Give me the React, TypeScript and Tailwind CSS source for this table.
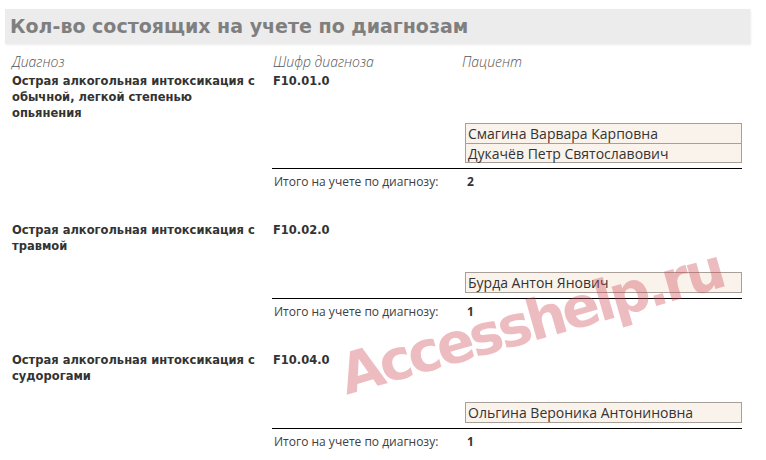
const verdana = "font-['DejaVu_Sans',sans-serif]"
const segoe = "font-['Open_Sans',sans-serif]"

interface DiagnosisGroup {
  readonly name: string
  readonly code: string
  readonly patients: readonly string[]
}

const groups: DiagnosisGroup[] = [
  {
    name: 'Острая алкогольная интоксикация с обычной, легкой степенью опьянения',
    code: 'F10.01.0',
    patients: ['Смагина Варвара Карповна', 'Дукачёв Петр Святославович'],
  },
  {
    name: 'Острая алкогольная интоксикация с травмой',
    code: 'F10.02.0',
    patients: ['Бурда Антон Янович'],
  },
  {
    name: 'Острая алкогольная интоксикация с судорогами',
    code: 'F10.04.0',
    patients: ['Ольгина Вероника Антониновна'],
  },
]

function GroupBlock({ group }: { group: DiagnosisGroup }) {
  return (
    <section>
      <div className="flex h-[50px]">
        <div className={`ml-[12px] w-[250px] text-[11.5px] font-bold leading-[16px] text-[#333] ${verdana}`}>
          {group.name}
        </div>
        <div className={`ml-[11px] text-[11.5px] font-bold leading-[16px] text-[#333] ${verdana}`}>
          {group.code}
        </div>
      </div>

      <div className="ml-[465px] w-[277px] border border-[#a8a098] bg-[#faf3ec]">
        {group.patients.map((p, i) => (
          <div
            key={p}
            className={`h-[19px] px-[2px] text-[14px] leading-[19px] text-[#333] ${segoe} ${
              i > 0 ? 'border-t border-[#a8a098]' : ''
            }`}
          >
            {p}
          </div>
        ))}
      </div>

      <div className="ml-[272px] mt-[5px] flex w-[470px] border-t border-black pb-[32px] pt-[5px]">
        <span className={`w-[195px] pl-[2px] text-[12px] leading-[16px] text-[#404040] ${segoe}`}>
          Итого на учете по диагнозу:
        </span>
        <span className={`text-[12px] font-bold leading-[16px] text-[#333] ${segoe}`}>
          {group.patients.length}
        </span>
      </div>
    </section>
  )
}

export default function App() {
  return (
    <div className="relative h-[460px] w-[766px] overflow-hidden bg-white">
      <div className="ml-[5px] mt-[9px] flex h-[35px] w-[745px] items-center bg-[#ececec] pl-[5px] shadow-[1px_1px_2px_rgba(0,0,0,0.08)]">
        <h1 className={`text-[19px] font-bold text-[#7f7f7f] ${verdana}`}>
          Кол-во состоящих на учете по диагнозам
        </h1>
      </div>

      <div className={`mt-[8px] flex h-[18px] items-center text-[14px] font-light italic text-[#555] ${segoe}`}>
        <div className="ml-[12px] w-[261px]">Диагноз</div>
        <div className="w-[189px]">Шифр диагноза</div>
        <div>Пациент</div>
      </div>

      <div className="mt-[3px]">
        {groups.map(g => (
          <GroupBlock key={g.code} group={g} />
        ))}
      </div>

      <div className={`pointer-events-none absolute left-[531px] top-[322px] -translate-x-1/2 -translate-y-1/2 -rotate-[16deg] whitespace-nowrap text-[56px] font-bold leading-none tracking-[-3.5px] text-[rgba(205,70,80,0.36)] ${verdana}`}>
        Accesshelp.ru
      </div>
    </div>
  )
}
